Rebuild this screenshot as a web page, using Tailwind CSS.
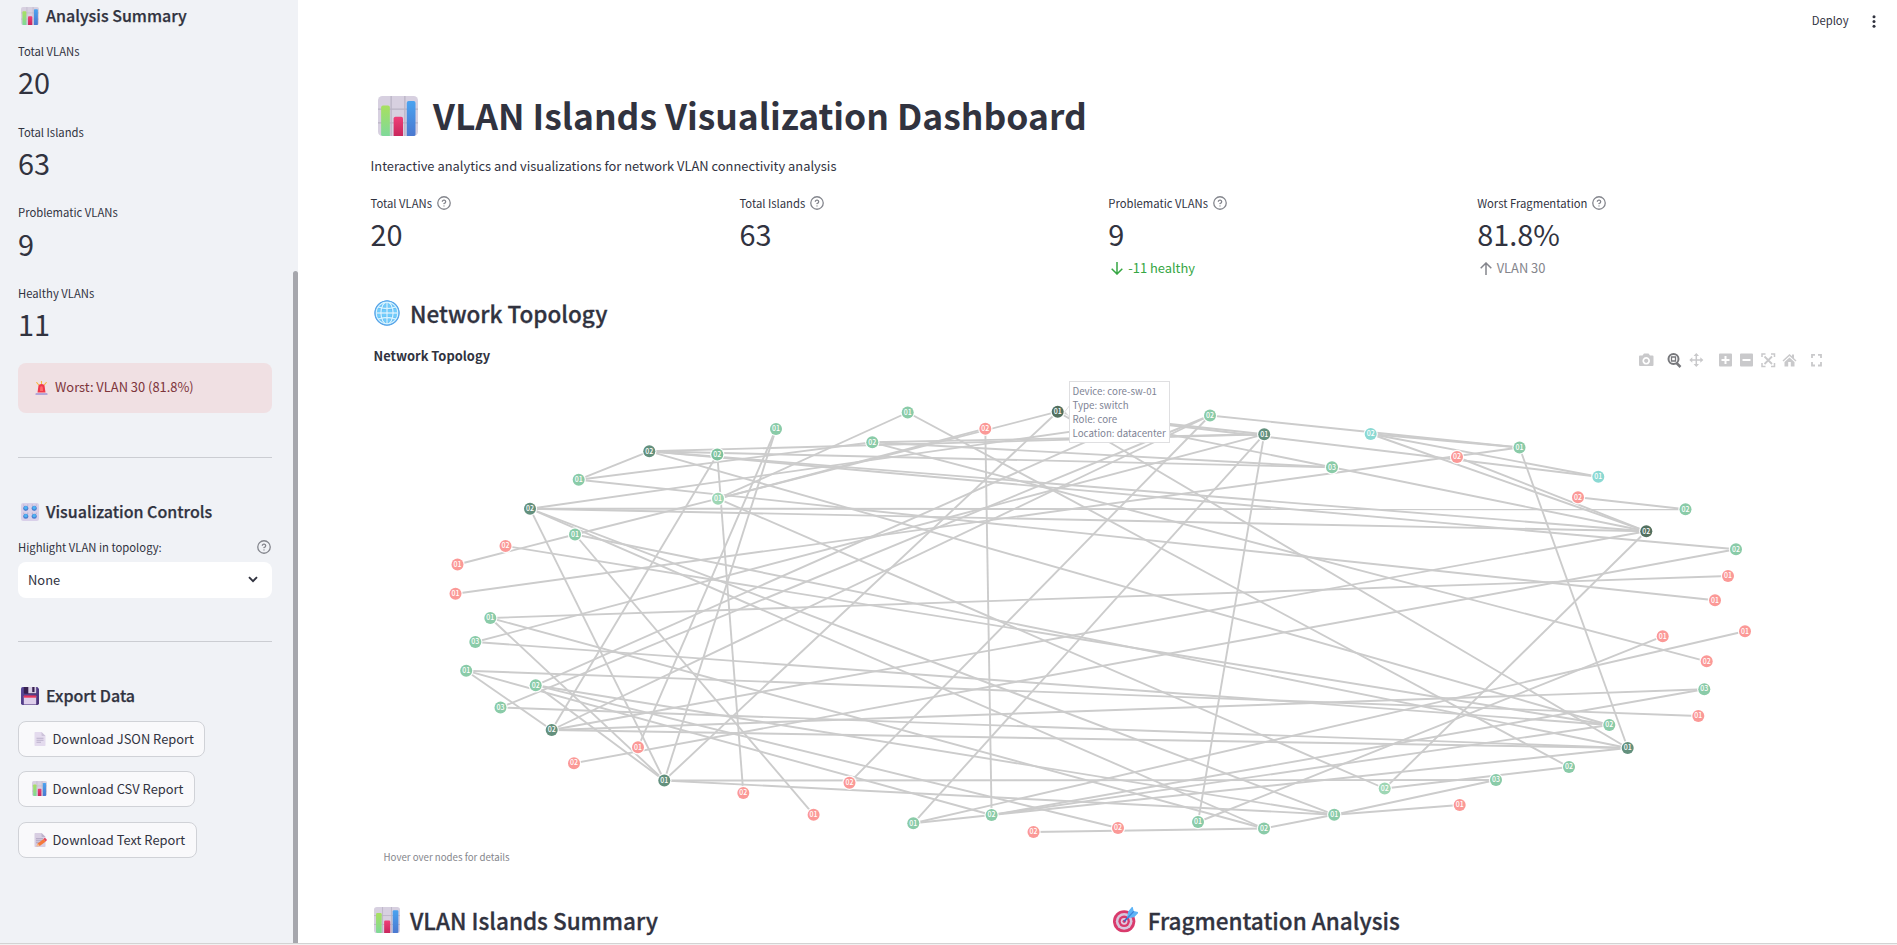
<!DOCTYPE html>
<html lang="en">
<head>
<meta charset="utf-8">
<title>VLAN Islands Visualization Dashboard</title>
<script src="https://cdn.jsdelivr.net/npm/@tailwindcss/browser@4"></script>
</head>
<body class="w-[1897px] h-[945px] overflow-hidden bg-white text-[#31333f] font-['Noto_Sans_CJK_SC','Open_Sans',sans-serif]">
<svg width="0" height="0" class="absolute">
  <defs>
    <linearGradient id="gg" x1="0" y1="0" x2="0" y2="1"><stop offset="0" stop-color="#a8e05f"/><stop offset="1" stop-color="#7fd99a"/></linearGradient>
    <linearGradient id="gb" x1="0" y1="0" x2="0" y2="1"><stop offset="0" stop-color="#4aa3f0"/><stop offset="1" stop-color="#4b78cf"/></linearGradient>
    <linearGradient id="gr" x1="0" y1="0" x2="0" y2="1"><stop offset="0" stop-color="#ef3f78"/><stop offset="1" stop-color="#c9265c"/></linearGradient>
    <linearGradient id="gp" x1="0" y1="0" x2="1" y2="1"><stop offset="0" stop-color="#5b4a9c"/><stop offset="1" stop-color="#4a3276"/></linearGradient>
    <symbol id="chart" viewBox="0 0 32 32">
      <rect width="32" height="32" rx="3.5" fill="#d7d0e0"/>
      <path d="M10.500 0v32M21.500 0v32M0 10.500h32M0 21.500h32" stroke="#b9b3c4" stroke-width="1"/>
      <path d="M2.500 9a1.500 1.500 0 0 1 1.500-1.500h4A1.500 1.500 0 0 1 9.500 9v23H4a1.500 1.500 0 0 1-1.500-1.500z" fill="url(#gg)"/>
      <path d="M12.500 18a1.500 1.500 0 0 1 1.500-1.500h4.500A1.500 1.500 0 0 1 20 18v14h-7.500z" fill="url(#gr)"/>
      <path d="M23 5.500A1.500 1.500 0 0 1 24.500 4h4A1.500 1.500 0 0 1 30 5.500v25a1.500 1.500 0 0 1-1.500 1.500H23z" fill="url(#gb)"/>
    </symbol>
    <symbol id="globe" viewBox="0 0 32 32">
      <circle cx="16" cy="16" r="15" fill="#70cdfb"/>
      <g fill="none" stroke="#58acee" stroke-width="2.600"><circle cx="16" cy="16" r="14"/><ellipse cx="16" cy="16" rx="7.500" ry="14"/><path d="M16 2v28M2 16h28M5 8.500q11 4 22 0M5 23.500q11-4 22 0"/></g>
      <g fill="none" stroke="#d6f4ff" stroke-width="1.700"><circle cx="16" cy="16" r="13.500"/><ellipse cx="16" cy="16" rx="7.500" ry="13.500"/><path d="M16 2.500v27M2.500 16h27M5 8.500q11 4 22 0M5 23.500q11-4 22 0"/></g>
      <circle cx="16" cy="16" r="14.800" fill="none" stroke="#5aa5e8" stroke-width="1.400"/>
    </symbol>
    <symbol id="target" viewBox="0 0 32 32">
      <circle cx="14" cy="18" r="14" fill="#d93a6c"/><circle cx="14" cy="18" r="10.500" fill="#d8c6dd"/><circle cx="14" cy="18" r="7.200" fill="#d93a6c"/><circle cx="14" cy="18" r="4.200" fill="#dfcbe2"/><circle cx="14" cy="18" r="2" fill="#d93a6c"/>
      <path d="M14 18 22 9.500" stroke="#3b62c4" stroke-width="2"/>
      <path d="m17.500 14 1.500-8.500L24.500-1l1.500 6 6.500 1.500-6 6.500z" fill="#5db4f6"/><path d="M17.500 14.500 26 5.500" stroke="#3c7fd8" stroke-width="1.500"/>
    </symbol>
    <symbol id="knobs" viewBox="0 0 32 32">
      <rect width="32" height="32" rx="4" fill="#d9d0e9"/>
      <g fill="#a9a1bd"><circle cx="5" cy="3.500" r="1"/><circle cx="12" cy="3.500" r="1"/><circle cx="20" cy="3.500" r="1"/><circle cx="27" cy="3.500" r="1"/><circle cx="5" cy="18" r="1"/><circle cx="12" cy="18" r="1"/><circle cx="20" cy="18" r="1"/><circle cx="27" cy="18" r="1"/></g>
      <g fill="#4a7fd0"><circle cx="8.500" cy="9.500" r="4.500"/><circle cx="23.500" cy="9.500" r="4.500"/><circle cx="8.500" cy="23.500" r="4.500"/><circle cx="23.500" cy="23.500" r="4.500"/></g>
      <g fill="#4fb4f3"><circle cx="8.500" cy="8.500" r="3"/><circle cx="23.500" cy="8.500" r="3"/><circle cx="8.500" cy="22.500" r="3"/><circle cx="23.500" cy="22.500" r="3"/></g>
    </symbol>
    <symbol id="floppy" viewBox="0 0 32 32">
      <path d="M0 3a3 3 0 0 1 3-3h26l3 3v26a3 3 0 0 1-3 3H3a3 3 0 0 1-3-3z" fill="url(#gp)"/>
      <path d="M5 0h22v10a2 2 0 0 1-2 2H7a2 2 0 0 1-2-2z" fill="#36204f"/><path d="M13 0h14v10a1 1 0 0 1-1 1H13z" fill="#d9cfe6"/><rect x="20" y="0" width="4" height="9" fill="#36204f"/>
      <path d="M5 16h22v15H5z" fill="#decfeb"/><path d="M5 15h22v4H5z" fill="#e8375c"/>
    </symbol>
    <symbol id="page" viewBox="0 0 24 28">
      <path d="M1 1.500A1.500 1.500 0 0 1 2.500 0H15l8 8v18.500a1.500 1.500 0 0 1-1.500 1.500h-19A1.500 1.500 0 0 1 1 26.500z" fill="#e4dbee"/><path d="M15 0v6.500A1.500 1.500 0 0 0 16.500 8H23z" fill="#cdc3da"/>
      <path d="M5 12.500h14M5 16.500h14M5 20.500h9" stroke="#b7abc6" stroke-width="1.800"/>
    </symbol>
    <symbol id="memo" viewBox="0 0 26 28">
      <path d="M1 1.500A1.500 1.500 0 0 1 2.500 0H15l8 8v18.500a1.500 1.500 0 0 1-1.500 1.500h-19A1.500 1.500 0 0 1 1 26.500z" fill="#d8cee2"/><path d="M15 0v6.500A1.500 1.500 0 0 0 16.500 8H23z" fill="#bdb2cb"/>
      <path d="M4 11.500h14M4 15.500h12M4 19.500h8" stroke="#a99cba" stroke-width="1.800"/>
      <path d="m5 26.500 2.500-5.500L19 12l4.500 5-12 9z" fill="#f5793b"/><path d="m19 12 2-1.800q1-.8 2 .2l2.400 2.600q.8 1-.2 2L23.500 17z" fill="#e8405a"/><path d="m5 26.500 2.500-5.500 4 5z" fill="#efc199"/>
    </symbol>
    <symbol id="siren" viewBox="0 0 24 28">
      <path d="M12 0v5M2.500 3l4 5M21.500 3l-4 5" stroke="#f6b73c" stroke-width="2.200" stroke-linecap="round"/>
      <path d="M4 23 5.500 12.500a6.500 6.500 0 0 1 13 0L20 23z" fill="#f0394b"/><path d="M9 20 9.500 13a2.500 2.500 0 0 1 5 0L15 20z" fill="#ff6b6b"/>
      <path d="M1.500 24h21a1.500 1.500 0 0 1 1.500 1.500V28H0v-2.500A1.500 1.500 0 0 1 1.500 24z" fill="#b5a6d8"/>
    </symbol>
    <symbol id="help" viewBox="0 0 24 24" fill="none" stroke="currentColor" stroke-width="2.200" stroke-linecap="round" stroke-linejoin="round">
      <circle cx="12" cy="12" r="10.700"/><path d="M9.090 9a3 3 0 0 1 5.830 1c0 2-3 3-3 3M12 17h.01"/>
    </symbol>
  </defs>
</svg>
<div class="flex flex-col h-full">
<div class="flex h-[943px] overflow-hidden shrink-0">

<aside class="w-[298px] shrink-0 flex bg-[#f0f2f6]">
  <div class="w-[293px] pl-[18px] pr-[21px] flex flex-col items-stretch">
    <h3 class="flex items-center h-8 pl-[3px] gap-[7px] text-[16px] font-medium [-webkit-text-stroke:0.25px] leading-8 whitespace-nowrap"><svg class="w-[18px] h-[18px] shrink-0"><use href="#chart"/></svg><span class="-mt-[2px]">Analysis Summary</span></h3>
    <div class="flex flex-col">
      <div class="h-[80.700px] pt-[9px]"><div class="text-[11.270px] leading-5">Total VLANs</div><div class="text-[28.900px] leading-[41px]">20</div></div>
      <div class="h-[80.700px] pt-[9px]"><div class="text-[11.270px] leading-5">Total Islands</div><div class="text-[28.900px] leading-[41px]">63</div></div>
      <div class="h-[80.700px] pt-[9px]"><div class="text-[11.270px] leading-5">Problematic VLANs</div><div class="text-[28.900px] leading-[43px]">9</div></div>
      <div class="h-[80.700px] pt-[9px]"><div class="text-[11.270px] leading-5">Healthy VLANs</div><div class="text-[28.900px] leading-[41px]">11</div></div>
    </div>
    <div class="mt-[8px] h-[50px] rounded-lg bg-[#f0e0e3] text-[#7d353b] flex items-center pl-[17px] gap-[7px] text-[12.900px]"><svg class="w-[13px] h-[14px] shrink-0"><use href="#siren"/></svg><span class="-mt-[2px]">Worst: VLAN 30 (81.8%)</span></div>
    <div class="mt-[44px] h-px bg-[#cbcdd2]"></div>
    <h3 class="mt-[38px] flex items-center h-8 pl-[3px] gap-[7px] text-[16px] font-medium [-webkit-text-stroke:0.25px] leading-8 whitespace-nowrap"><svg class="w-[18px] h-[18px] shrink-0"><use href="#knobs"/></svg><span class="-mt-[2px]">Visualization Controls</span></h3>
    <div class="mt-[8px] h-[22px] flex items-center justify-between pr-px text-[11.270px]"><span class="mt-px">Highlight VLAN in topology:</span><svg class="w-[14px] h-[14px] text-[#83858c] overflow-visible"><use href="#help"/></svg></div>
    <div class="mt-[4px] h-9 rounded-lg bg-white flex items-center justify-between pl-[10px] pr-[14px] text-[12.900px]"><span>None</span><svg class="w-[10px] h-[7px]" viewBox="0 0 10 7" fill="none" stroke="#31333f" stroke-width="1.900"><path d="m1 1.200 4 4 4-4"/></svg></div>
    <div class="mt-[43px] h-px bg-[#cbcdd2]"></div>
    <h3 class="mt-[38px] flex items-center h-8 pl-[3px] gap-[7px] text-[16px] font-medium [-webkit-text-stroke:0.25px] leading-8 whitespace-nowrap"><svg class="w-[18px] h-[18px] shrink-0"><use href="#floppy"/></svg><span class="-mt-[2px]">Export Data</span></h3>
    <div class="mt-[9px] flex flex-col gap-[14.700px] text-[12.900px] whitespace-nowrap">
      <button class="w-[187px] h-9 rounded-lg border border-[#d0d2d7] bg-[#f9f9fb] flex items-center pl-[14.500px] gap-[7px]"><svg class="w-[12px] h-[14px] shrink-0"><use href="#page"/></svg><span>Download JSON Report</span></button>
      <button class="w-[177px] h-9 rounded-lg border border-[#d0d2d7] bg-[#f9f9fb] flex items-center pl-[13px] gap-[5.500px]"><svg class="w-[15px] h-[15px] shrink-0 -mt-[2px]"><use href="#chart"/></svg><span class="-mt-px">Download CSV Report</span></button>
      <button class="w-[179px] h-9 rounded-lg border border-[#d0d2d7] bg-[#f9f9fb] flex items-center pl-[14.500px] gap-[6px]"><svg class="w-[13px] h-[14px] shrink-0"><use href="#memo"/></svg><span>Download Text Report</span></button>
    </div>
  </div>
  <div class="w-[5px] pt-[271px]"><div class="h-full rounded-t-full bg-[#a6a7ad]"></div></div>
</aside>

<main class="flex-1 pl-[72.500px] pr-[67px] flex flex-col">
  <header class="h-[42px] -mr-[45px] flex items-center justify-end gap-[23.500px] text-[11.270px]"><span class="-mt-[2px]">Deploy</span><svg class="w-[4px] h-[13px] mr-[-1px]" viewBox="0 0 4 13" fill="#31333f"><circle cx="2" cy="1.700" r="1.500"/><circle cx="2" cy="6.500" r="1.500"/><circle cx="2" cy="11.300" r="1.500"/></svg></header>
  <h1 class="mt-[48px] h-[52px] flex items-center pl-[7.500px] gap-[15px] text-[35.450px] leading-[52px] font-bold whitespace-nowrap"><svg class="w-[40px] h-[40px] shrink-0"><use href="#chart"/></svg><span class="-mt-[2px]">VLAN Islands Visualization Dashboard</span></h1>
  <p class="mt-[12px] h-6 text-[12.900px] leading-6">Interactive analytics and visualizations for network VLAN connectivity analysis</p>
  <section class="mt-[15px] h-[88px] grid grid-cols-4 gap-4">
    <div><div class="flex items-center gap-[5px] h-5 text-[11.270px] leading-5"><span>Total VLANs</span><svg class="w-[14px] h-[14px] text-[#83858c] overflow-visible"><use href="#help"/></svg></div><div class="text-[28.900px] leading-[41px]">20</div></div>
    <div><div class="flex items-center gap-[5px] h-5 text-[11.270px] leading-5"><span>Total Islands</span><svg class="w-[14px] h-[14px] text-[#83858c] overflow-visible"><use href="#help"/></svg></div><div class="text-[28.900px] leading-[41px]">63</div></div>
    <div><div class="flex items-center gap-[5px] h-5 text-[11.270px] leading-5"><span>Problematic VLANs</span><svg class="w-[14px] h-[14px] text-[#83858c] overflow-visible"><use href="#help"/></svg></div><div class="text-[28.900px] leading-[41px]">9</div>
      <div class="mt-[2px] flex items-center gap-[5px] h-6 pl-[3px] text-[#35a643]"><svg class="w-[12px] h-[13px]" viewBox="0 0 12 13" fill="none" stroke="currentColor" stroke-width="1.500"><path d="M6 0v11.800M.7 6.700 6 12l5.300-5.300"/></svg><span class="-mt-px text-[12.900px]">-11 healthy</span></div></div>
    <div><div class="flex items-center gap-[5px] h-5 text-[11.270px] leading-5"><span>Worst Fragmentation</span><svg class="w-[14px] h-[14px] text-[#83858c] overflow-visible"><use href="#help"/></svg></div><div class="text-[28.900px] leading-[41px]">81.8%</div>
      <div class="mt-[2px] flex items-center gap-[4.500px] h-6 pl-[3px] text-[#84858c]"><svg class="w-[12px] h-[13px]" viewBox="0 0 12 13" fill="none" stroke="currentColor" stroke-width="1.500"><path d="M6 13V1.200M.7 6.300 6 1l5.300 5.300"/></svg><span class="-mt-px text-[12.900px]">VLAN 30</span></div></div>
  </section>
  <h2 class="mt-[14px] h-9 flex items-center pl-[3.500px] gap-[10px] text-[22.500px] leading-9 font-medium [-webkit-text-stroke:0.3px]"><svg class="w-[26px] h-[26px]"><use href="#globe"/></svg><span>Network Topology</span></h2>
  <section class="relative mt-[9px] w-[1459px] h-[530px]">
    <div class="absolute left-[3px] top-[4px] leading-6 text-[12.900px] font-bold">Network Topology</div>
    <svg id="topology" class="block w-[1459px] h-[530px]" viewBox="371 340 1459 530"></svg>
    <div class="absolute left-[698px] top-[41px] w-[101px] h-[62px] border border-[#dfdfe1] bg-white pl-[3px] pt-[2px] text-[9.720px] leading-[14px] text-[#808495] whitespace-nowrap"><div>Device: core-sw-01</div><div>Type: switch</div><div>Role: core</div><div>Location: datacenter</div></div>
    <svg class="absolute left-[1264px] top-[10px] w-[190px] h-[20px]" viewBox="1635 350 190 20" fill="#c9c9cb">
      <path fill-rule="evenodd" d="M1640 355.500h2.500l1.500-2h4.500l1.500 2h2.500q1 0 1 1v8.500q0 1-1 1h-12.500q-1 0-1-1v-8.500q0-1 1-1zM1646.200 357a3.800 3.800 0 1 0 .01 0zM1646.200 358.700a2.100 2.100 0 1 1-.01 0z"/>
      <g fill="none" stroke="#77787c"><circle cx="1673.500" cy="359" r="5" stroke-width="2"/><path d="m1676.500 363 4 4" stroke-width="2.500"/><path d="M1671.500 357h4v4h-4z" stroke-width="1.300"/></g>
      <g fill="none" stroke="#c9c9cb"><path d="M1696.300 354v12M1690.300 360h12" stroke-width="1.500"/></g>
      <path d="m1696.300 353 2.700 3h-5.400zM1696.300 367l2.700-3h-5.400zM1689.300 360l3-2.700v5.400zM1703.300 360l-3-2.700v5.400z"/>
      <path fill-rule="evenodd" d="M1720 353.500h11q1 0 1 1v11q0 1-1 1h-11q-1 0-1-1v-11q0-1 1-1zM1724.500 356v3h-3v2h3v3h2v-3h3v-2h-3v-3z"/>
      <path fill-rule="evenodd" d="M1741 353.500h11q1 0 1 1v11q0 1-1 1h-11q-1 0-1-1v-11q0-1 1-1zM1742.500 359v2h8v-2z"/>
      <g fill="none" stroke="#c9c9cb" stroke-width="1.500"><path d="M1762 357v-3h3.500M1771 354h3.500v3M1774.500 363v3.500h-3.500M1765.500 366.500h-3.500v-3.500"/><path d="m1764.500 356.500 7.500 7.500M1772 356.500l-7.500 7.500" stroke-width="1.800"/></g>
      <path d="m1782.500 360.500 7-6.500 2.500 2.300v-1.800h2v3.700l2.500 2.300-1 1-6-5.500-6 5.500zM1784.500 362l5-4.600 5 4.600v4.500h-3.700V362h-2.600v4.500h-3.700z"/>
      <path d="M1812 358v-3.200h3M1818 354.800h3v3.200M1821 362v3.500h-3M1815 365.500h-3V362" fill="none" stroke="#c9c9cb" stroke-width="1.800"/>
    </svg>
  </section>
  <section class="mt-[32px] grid grid-cols-2 gap-4">
    <h2 class="h-9 flex items-center pl-[3.500px] gap-[10px] text-[22.500px] leading-9 font-medium [-webkit-text-stroke:0.3px]"><svg class="w-[26px] h-[26px]"><use href="#chart"/></svg><span>VLAN Islands Summary</span></h2>
    <h2 class="h-9 flex items-center pl-[4.500px] gap-[9.500px] text-[22.500px] leading-9 font-medium [-webkit-text-stroke:0.3px]"><svg class="w-[25.500px] h-[25.500px]"><use href="#target"/></svg><span>Fragmentation Analysis</span></h2>
  </section>
</main>
</div>
<div class="h-px shrink-0 bg-[#d3d3d3]"></div>
<div class="h-px shrink-0 bg-[#f1f1f1]"></div>
</div>
<script>
const GREEN='#8acba8', LIGHT='#9ed6b4', DARK='#63907d', DARKEST='#53705f', TEAL='#8bd9d3', RED='#fb9997';
const nodes={
A:[776,429,'01',GREEN],B:[649.3,451.3,'02',DARK],C:[717.3,454.5,'02','#7dc29c'],D:[578.7,479.7,'01',GREEN],E:[530,508.7,'02',DARK],F:[718,498.7,'01',LIGHT],
G:[575,534.5,'01',GREEN],H:[505.5,546,'02',RED],I:[457.5,564.5,'01',RED],J:[455.5,593.7,'01',RED],K:[490.3,618,'01',GREEN],L:[475.3,642,'03',GREEN],
M:[466.2,670.7,'01',GREEN],N:[535.7,685.3,'02',GREEN],O:[500.5,707.5,'03',GREEN],P:[551.7,730,'02',DARK],Q:[638,747.3,'01',RED],R:[574,763.2,'02',RED],
S:[664.3,780.5,'01',DARK],T:[743.3,793,'02',RED],T2:[813.6,814.7,'01',RED],U:[907.7,412.5,'01',GREEN],V:[872.3,442.3,'02',GREEN],W:[985.3,428.7,'02',RED],
X:[1057.7,411.7,'01',DARKEST],Y:[1210,415.5,'02',GREEN],Z:[1264.2,434.3,'01',DARK],a:[1370.7,434,'02',TEAL],b:[1332,467.3,'03',GREEN],c:[1457,457,'02',RED],
d:[1519.5,447.5,'01',GREEN],e:[1578,497.3,'02',RED],f:[1598.3,476.7,'01',TEAL],g:[1685.5,509.3,'02',GREEN],h:[1646.3,531.3,'02',DARKEST],i:[1736,549.3,'02',GREEN],
j:[1728,576,'01',RED],k:[1715,600.3,'01',RED],l:[1745,631.3,'01',RED],m:[1662.7,636.3,'01',RED],n:[1706.7,661.3,'02',RED],o:[1704.3,689.2,'03',GREEN],
p:[1698.3,716,'01',RED],q:[1609.3,725,'02',GREEN],r:[1627.7,748,'01',DARK],s:[1569,767,'02',GREEN],t:[849.5,782.7,'02',RED],u:[913.3,823.3,'01',GREEN],
v:[991.6,815,'02',GREEN],w:[1033.5,832,'02',RED],x:[1118,828,'02',RED],y:[1198,822,'01',GREEN],z:[1264,828.5,'02',GREEN],A2:[1334.2,814.7,'01',GREEN],
B2:[1384.7,788.5,'02',LIGHT],C2:[1459.7,805,'01',RED],D2:[1496,780,'03',GREEN],h0:[1127,423.6,'02',GREEN]};
const edges=`I-G G-F F-W F-X F-U F-B2 D-V D-k D-B B-q B-Z V-Z B-b V-b B-h B-i C-P C-T A-Q A-S E-h0 N-h0 E-g E-h E-S E-A2 E-z H-q G-r G-T2 J-d K-j K-z K-S
L-Z L-q M-p M-v M-P N-S O-Y P-Y P-h P-o P-r O-r N-A2 N-x X-S X-r X-Z X-f X-b b-h Z-u Y-t Z-y Y-d a-d a-f a-h c-h e-g h-B2 R-i d-r l-u v-o v-q u-r m-y V-n
U-s W-v S-D2 S-A2 A2-z A2-D2 A2-C2 w-z B2-s`.split(/\s+/);
let out='<g stroke="#cccccc" stroke-width="1.9">';
for(const k of edges){const [p,q]=k.split('-').map(n=>nodes[n]);out+=`<line x1="${p[0]}" y1="${p[1]}" x2="${q[0]}" y2="${q[1]}"/>`}
out+='</g>';
for(const [x,y,label,fill] of Object.values(nodes)){
  out+=`<circle cx="${x}" cy="${y}" r="7.200" fill="#fff" fill-opacity=".92"/><circle cx="${x}" cy="${y}" r="6" fill="${fill}"/><text x="${x}" y="${y+2.2}" text-anchor="middle" font-size="7" font-weight="500" fill="#fff">${label}</text>`}
out+='<path d="M1070 405l-5 6.500 5 6.500" fill="#fff" stroke="#dfdfe1"/>';
out+='<text x="383.500" y="861" font-size="9.700" fill="#85868c">Hover over nodes for details</text>';
document.getElementById('topology').innerHTML=out;
</script>
</body>
</html>
